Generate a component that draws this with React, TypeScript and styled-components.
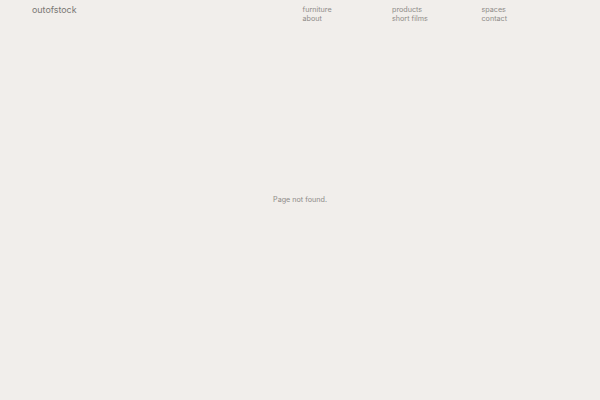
import React from "react";
import styled, { createGlobalStyle } from "styled-components";

const Global = createGlobalStyle`
  html, body {
    margin: 0;
    padding: 0;
    background: #f1eeeb;
  }
  body {
    font-family: 'Inter', 'Liberation Sans', sans-serif;
    color: #7a7774;
  }
`;

const Page = styled.div`
  width: 100%;
  height: 400px;
  display: flex;
  flex-direction: column;
`;

const Header = styled.header`
  display: flex;
  justify-content: space-between;
  align-items: flex-start;
  padding: 4px 29px 0 32px;
`;

const Logo = styled.a`
  font-size: 8.9px;
  line-height: 12px;
  color: #7a7774;
  text-decoration: none;
`;

const Nav = styled.nav`
  display: grid;
  grid-template-columns: repeat(3, 89.5px);
  grid-auto-rows: 8.5px;
  padding-top: 2px;
`;

const NavLink = styled.a`
  font-size: 7.2px;
  line-height: 8.5px;
  color: #8e8b88;
  text-decoration: none;
`;

const Main = styled.main`
  flex: 1;
  display: flex;
  align-items: center;
  justify-content: center;
  padding-bottom: 24px;
`;

const Message = styled.p`
  margin: 0;
  font-size: 7.2px;
  color: #8e8b88;
`;

const links = ["furniture", "products", "spaces", "about", "short films", "contact"];

function App() {
  return (
    <Page>
      <Global />
      <Header>
        <Logo href="#">outofstock</Logo>
        <Nav>
          {links.map((l) => (
            <NavLink key={l} href="#">{l}</NavLink>
          ))}
        </Nav>
      </Header>
      <Main>
        <Message>Page not found.</Message>
      </Main>
    </Page>
  );
}

export default App;
